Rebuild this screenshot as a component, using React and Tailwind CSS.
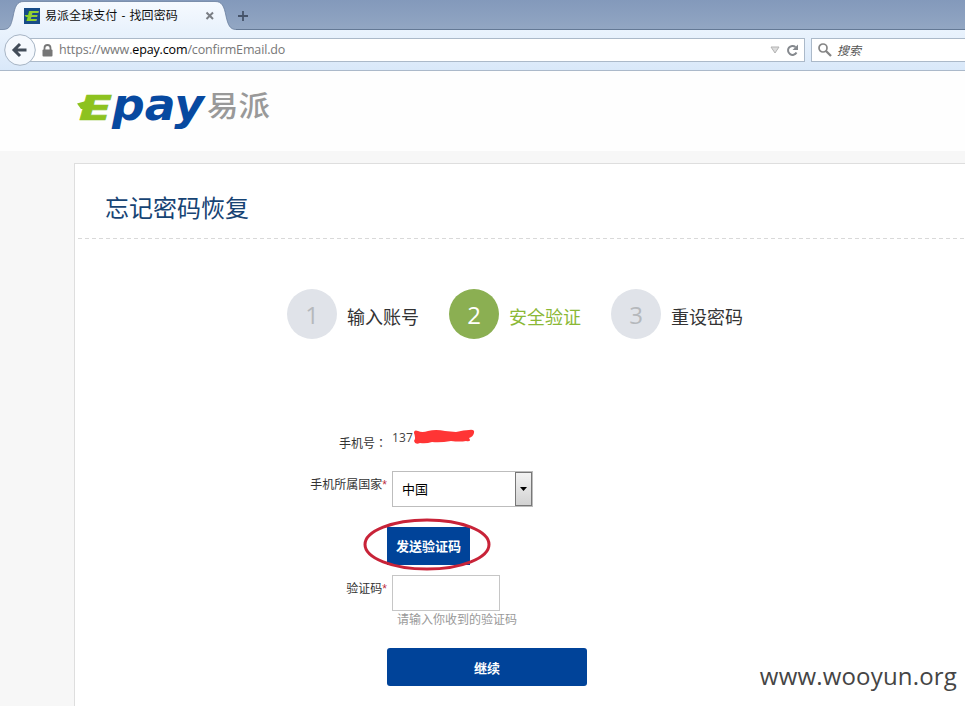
import React from "react";

const steps = [
  { n: "1", label: "输入账号", active: false },
  { n: "2", label: "安全验证", active: true },
  { n: "3", label: "重设密码", active: false },
];

function TabStrip() {
  return (
    <div className="flex h-[30px] items-end bg-linear-to-b from-[#8399bb] to-[#93a7c3] bg-[#8a9fbf]">
      <div className="relative h-[30px] w-[236px] shrink-0">
        <svg className="absolute inset-0" width="236" height="30" viewBox="0 0 236 30">
          <defs>
            <linearGradient id="tab" x1="0" y1="0" x2="0" y2="1">
              <stop offset="0" stopColor="#f6faff" />
              <stop offset="1" stopColor="#e9f2fc" />
            </linearGradient>
          </defs>
          <path d="M0 29.5H3C10 29.5 11 25 13 17C15 6 17 1.5 24 1.5H215C222 1.5 224 6 226 16C228 25 230 29.5 236 29.5V30H0Z" fill="url(#tab)" />
          <path d="M0 29.5H3C10 29.5 11 25 13 17C15 6 17 1.5 24 1.5H215C222 1.5 224 6 226 16C228 25 230 29.5 236 29.5" fill="none" stroke="#667b9b" strokeOpacity=".75" />
        </svg>
        <div className="relative flex h-[30px] items-center pl-6 pt-[2px]">
          <svg className="overflow-visible" width="16" height="16" viewBox="0 0 16 16">
            <rect width="16" height="16" fill="#174b87" />
            <path d="M0.500 7H4V9H2Z" fill="#91d02e" />
            <text x="2" y="13" textLength="13" lengthAdjust="spacingAndGlyphs" fontSize="14" fontWeight="700" fontStyle="italic" fontFamily="'DejaVu Sans', sans-serif" fill="#91d02e">E</text>
          </svg>
          <span className="ml-[5px] whitespace-pre text-[12px] leading-4 tracking-[0.05px] text-[#101010]">易派全球支付 <span className="mx-[1px] font-['Open_Sans']">-</span> 找回密码</span>
          <svg className="absolute left-[205px] top-[11px]" width="10" height="10" viewBox="0 0 10 10">
            <path d="M1.5 1.5L8 8M8 1.5L1.5 8" stroke="#7a7e84" strokeWidth="2" />
          </svg>
        </div>
      </div>
      <div className="flex h-[30px] flex-1 border-b border-[#647995] pl-[1px] pt-[10px]">
        <svg width="12" height="12" viewBox="0 0 12 12">
          <path d="M6 1V11M1 6H11" stroke="#46546a" strokeWidth="1.8" />
        </svg>
      </div>
    </div>
  );
}

function NavBar() {
  return (
    <div className="relative flex h-[41px] border-b border-[#abb9ca] bg-linear-to-b from-[#eaf3fd] to-[#d9e8f9] pt-2">
      <div className="ml-[20px] flex h-6 w-[785px] shrink-0 items-center border border-[#abb9c9] bg-white pl-[21px] pr-[5px]">
        <svg width="11" height="13" viewBox="0 0 11 13">
          <path d="M2.5 6V4A3 3 0 0 1 8.500 4V6" fill="none" stroke="#777" strokeWidth="1.8" />
          <rect x="0.500" y="5.500" width="10" height="7" rx="1" fill="#777" />
        </svg>
        <span className="ml-[6px] flex-1 whitespace-nowrap text-[12.5px] leading-5 tracking-[-0.14px] text-[#777]">
          https://www.<span className="text-black">epay.com</span>/confirmEmail.do
        </span>
        <svg width="10" height="8" viewBox="0 0 10 8">
          <path d="M1 1H9L5 7Z" fill="#dcdcdc" stroke="#b3b3b3" />
        </svg>
        <svg className="ml-[6px]" width="13" height="13" viewBox="0 0 13 13">
          <path d="M10.500 8.500A4.500 4.500 0 1 1 9.500 3" fill="none" stroke="#85898e" strokeWidth="2" />
          <path d="M12 .5V6H6.500Z" fill="#85898e" />
        </svg>
      </div>
      <div className="ml-[6px] flex h-6 flex-1 items-center border border-r-0 border-[#abb9c9] bg-white pl-[6px]">
        <svg width="14" height="14" viewBox="0 0 14 14">
          <circle cx="5" cy="5" r="4" fill="none" stroke="#858585" strokeWidth="1.7" />
          <path d="M8 8L13 13" stroke="#858585" strokeWidth="2.300" />
        </svg>
        <span className="ml-[5px] pt-px text-[12px] italic leading-4 text-[#555]">搜索</span>
      </div>
      <svg className="absolute left-1 top-1" width="32" height="32" viewBox="0 0 32 32">
        <circle cx="16" cy="16" r="15.300" fill="#f5f9fe" stroke="#a6b4c4" />
        <path d="M22.500 16H11M16 10L10 16L16 22" fill="none" stroke="#424c59" strokeWidth="3" />
      </svg>
    </div>
  );
}

function Logo() {
  return (
    <svg className="overflow-visible" width="200" height="46" viewBox="0 0 200 46" aria-label="Epay 易派">
      <g fontFamily="'DejaVu Sans', sans-serif" fontWeight="700" fontStyle="italic">
        <path d="M1 14.500L10 12L9 20H5Z" fill="#8dc21f" />
        <text x="3" y="30.500" fontSize="34" textLength="33" lengthAdjust="spacingAndGlyphs" fill="#8dc21f" stroke="#8dc21f" strokeWidth="0.700">E</text>
        <text x="36" y="30.500" fontSize="44" textLength="92" lengthAdjust="spacingAndGlyphs" fill="#0749a0">pay</text>
      </g>
      <text x="131" y="28" fontSize="29" fontWeight="500" textLength="63" lengthAdjust="spacingAndGlyphs" fontFamily="'Noto Sans CJK SC', sans-serif" fill="#999">易派</text>
    </svg>
  );
}

function Steps() {
  return (
    <div className="ml-[212px] mt-[50px] flex h-[50px]">
      {steps.map((s) => (
        <div key={s.n} className="flex w-[162px] shrink-0">
          <div className={s.active ? "flex size-[50px] items-center justify-center rounded-full bg-[#8baf52] text-[24px] text-white" : "flex size-[50px] items-center justify-center rounded-full bg-[#e0e3e9] text-[24px] text-[#b5b8bc]"}>
            <span className="pt-[2px] leading-6">{s.n}</span>
          </div>
          <span className={s.active ? "ml-[10px] mt-[16px] text-[18px] leading-6 text-[#8bb836]" : "ml-[10px] mt-[16px] text-[18px] leading-6 text-[#333]"}>{s.label}</span>
        </div>
      ))}
    </div>
  );
}

function RecoveryForm() {
  return (
    <div className="text-[12px] leading-4 text-[#333]">
      <div className="mt-[88px] flex h-[44px]">
        <span className="w-[312px] pt-[8px] text-right">手机号<span className="font-['Noto_Sans_CJK_TC']">：</span></span>
        <span className="ml-[5px] w-[21px] pt-[3px] text-[12px] tracking-[0.15px] text-[#444]">137</span>
        <svg className="mt-[2px]" width="62" height="16" viewBox="0 0 62 16">
          <path d="M1 4C1 1 3 1 5 2Q9 4 15 2Q23 0 32 2L43 3Q51 1 56 1Q62 0 61 4Q60 8 56 9Q59 13 53 12Q47 13 38 12Q27 14 19 13Q13 15 7 14Q2 16 1 12Q3 9 1 4Z" fill="#ff3535" />
        </svg>
      </div>
      <div className="flex h-[56px]">
        <span className="w-[312px] pt-[6px] text-right">手机所属国家<span className="font-['Liberation_Sans'] text-[#bc3042]">*</span></span>
        <div className="ml-[5px] flex h-[36px] w-[141px] items-center border border-[#bdbdbd] bg-white pl-[9px] text-[13px] text-black">
          <span className="flex-1">中国</span>
          <div className="flex h-[34px] w-[17px] items-center justify-center border border-[#777] bg-linear-to-b from-[#f3f3f3] to-[#d2d2d2]">
            <svg width="7" height="4" viewBox="0 0 7 4"><path d="M0 0H7L3.500 4Z" fill="#000" /></svg>
          </div>
        </div>
      </div>
      <div className="relative ml-[312px] h-[48px]">
        <button className="block h-[38px] w-[83px] whitespace-nowrap bg-[#004399] text-[13px] font-bold text-white">发送验证码</button>
        <svg className="absolute -left-6 -top-[9px]" width="128" height="53" viewBox="0 0 128 53">
          <ellipse cx="64" cy="26.500" rx="62" ry="24.500" fill="none" stroke="#c82338" strokeWidth="3" />
        </svg>
      </div>
      <div className="flex h-[36px]">
        <span className="w-[312px] pt-[6px] text-right">验证码<span className="font-['Liberation_Sans'] text-[#bc3042]">*</span></span>
        <input aria-label="验证码" className="ml-[5px] h-[36px] w-[108px] border border-[#c6c6c6] bg-white" />
      </div>
      <div className="ml-[322px] h-[37px] pt-px text-[#999]">请输入你收到的验证码</div>
      <button className="ml-[312px] block h-[38px] w-[200px] rounded-[3px] bg-[#004399] pt-px text-[13px] font-bold text-white">继续</button>
    </div>
  );
}

export default function App() {
  return (
    <div className="relative h-[706px] w-[965px] overflow-hidden bg-[#f7f7f7] font-['Open_Sans','Noto_Sans_CJK_SC',sans-serif]">
      <TabStrip />
      <NavBar />
      <header className="h-[80px] bg-[#fefefe] pl-[76px] pt-[18px]">
        <Logo />
      </header>
      <main className="ml-[74px] mt-[12px] h-[560px] border-l border-t border-[#dedede] bg-white">
        <h1 className="h-[74px] pl-[30px] pt-[28px] text-[24px] leading-8 text-[#174474]">忘记密码恢复</h1>
        <div className="ml-[3px] h-px bg-[repeating-linear-gradient(90deg,#d9d9d9_0_4px,transparent_4px_7px)]" />
        <Steps />
        <RecoveryForm />
      </main>
      <div className="absolute bottom-[14px] right-[8px] text-[24px] leading-8 tracking-[0.18px] text-[#454545]">www.wooyun.org</div>
    </div>
  );
}
